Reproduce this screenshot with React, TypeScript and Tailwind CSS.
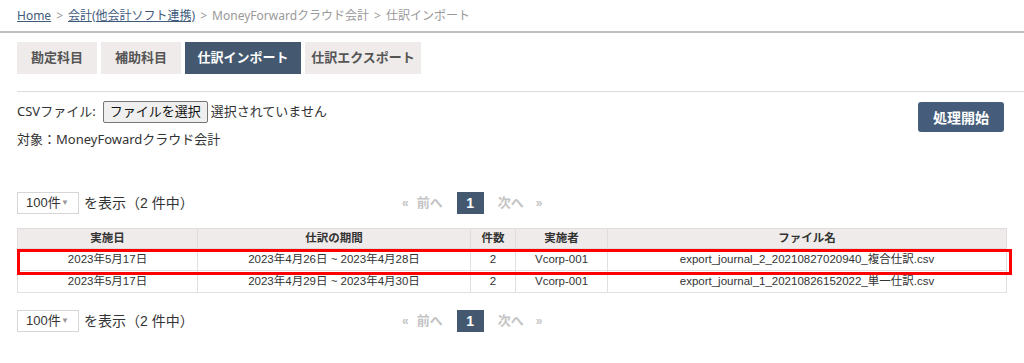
import React from 'react';

const jp = "font-['Noto_Sans','Noto_Sans_CJK_JP',sans-serif]";
const ar = "font-['Liberation_Sans','Noto_Sans_CJK_JP',sans-serif]";

const rows = [
  {
    date: '2023年5月17日',
    period: '2023年4月26日 ~ 2023年4月28日',
    count: '2',
    user: 'Vcorp-001',
    file: 'export_journal_2_20210827020940_複合仕訳.csv',
    marked: true,
  },
  {
    date: '2023年5月17日',
    period: '2023年4月29日 ~ 2023年4月30日',
    count: '2',
    user: 'Vcorp-001',
    file: 'export_journal_1_20210826152022_単一仕訳.csv',
    marked: false,
  },
];

function Pager() {
  return (
    <div className={`flex items-center h-[22px] ${ar}`}>
      <div className="flex items-center w-[385px]">
        <div className="flex items-center justify-between w-[62px] h-[22px] border border-[#d6d6d6] bg-white pl-[8px] pr-[9px] text-[13px] text-[#333]">
          <span>100件</span>
          <span className="text-[8px] text-[#999]">▼</span>
        </div>
        <span className="ml-[5px] text-[14px] text-[#333]">を表示（2 件中）</span>
      </div>
      <div className="flex items-center text-[13px] text-[#c4c4c4] font-bold">
        <span className="text-[12px]">«</span>
        <span className="ml-[8px]">前へ</span>
        <span className="ml-[14px] flex items-center justify-center w-[27px] h-[22px] bg-[#44596f] text-white text-[14px]">1</span>
        <span className="ml-[14px]">次へ</span>
        <span className="ml-[12px] text-[12px]">»</span>
      </div>
    </div>
  );
}

export default function App() {
  return (
    <div className="w-[1024px] h-[363px] bg-white overflow-hidden">
      {/* breadcrumb */}
      <div className={`h-[31px] flex items-center pl-[17px] text-[12px] text-[#999] ${jp}`}>
        <span className="underline text-[#3f5b7c]">Home</span>
        <span className="mx-[5px]">&gt;</span>
        <span className="underline text-[#3f5b7c]">会計(他会計ソフト連携)</span>
        <span className="mx-[5px]">&gt;</span>
        <span>MoneyForwardクラウド会計</span>
        <span className="mx-[5px]">&gt;</span>
        <span>仕訳インポート</span>
      </div>
      <div className="h-[2px] bg-[#bdbdbd]" />

      {/* tabs */}
      <div className="pl-[17px] pt-[9px]">
        <div className={`flex gap-[4px] text-[13px] font-bold ${jp}`}>
          <div className="w-[80px] h-[32px] flex items-center justify-center bg-[#efebea] text-[#555]">勘定科目</div>
          <div className="w-[80px] h-[32px] flex items-center justify-center bg-[#efebea] text-[#555]">補助科目</div>
          <div className="w-[116px] h-[32px] flex items-center justify-center bg-[#44596f] text-white">仕訳インポート</div>
          <div className="w-[116px] h-[32px] flex items-center justify-center bg-[#efebea] text-[#555]">仕訳エクスポート</div>
        </div>
        <div className="mt-[17px] h-[1px] bg-[#dcdcdc]" />

        {/* upload area */}
        <div className={`flex justify-between pr-[20px] pt-[9px] ${jp}`}>
          <div className="text-[13px] text-[#333]">
            <div className="flex items-center h-[22px]">
              <span>CSVファイル:</span>
              <span className="ml-[7px] h-[22px] px-[6px] flex items-center border border-[#767676] rounded-[2px] bg-[#efefef] text-[#111]">ファイルを選択</span>
              <span className="ml-[3px]">選択されていません</span>
            </div>
            <div className="mt-[6px] h-[22px] flex items-center">対象：MoneyFowardクラウド会計</div>
          </div>
          <div className="mt-[1px] w-[86px] h-[30px] flex items-center justify-center rounded-[3px] bg-[#455d7a] text-white font-bold text-[14px]">処理開始</div>
        </div>

        {/* list */}
        <div className="mt-[41px]">
          <Pager />
        </div>

        <div className={`mt-[14px] w-[990px] ${ar}`}>
          <table className="w-full border-collapse text-[11.5px] text-[#333]">
            <thead>
              <tr className="bg-[#efebea] h-[20px] font-bold">
                <th className="w-[180px] border border-[#e0dcdb]">実施日</th>
                <th className="w-[273px] border border-[#e0dcdb]">仕訳の期間</th>
                <th className="w-[45px] border border-[#e0dcdb]">件数</th>
                <th className="w-[92px] border border-[#e0dcdb]">実施者</th>
                <th className="border border-[#e0dcdb]">ファイル名</th>
              </tr>
            </thead>
            <tbody>
              {rows.map((r) => (
                <tr key={r.file} className="h-[22px] text-center">
                  <td className="border border-[#e0e0e0] relative">
                    {r.date}
                    {r.marked && (
                      <span className="absolute left-[-1px] top-[0px] w-[995px] h-[26px] border-[3px] border-[#ff0000] pointer-events-none" />
                    )}
                  </td>
                  <td className="border border-[#e0e0e0]">{r.period}</td>
                  <td className="border border-[#e0e0e0]">{r.count}</td>
                  <td className="border border-[#e0e0e0]">{r.user}</td>
                  <td className="border border-[#e0e0e0]">{r.file}</td>
                </tr>
              ))}
            </tbody>
          </table>
        </div>

        <div className="mt-[17px]">
          <Pager />
        </div>
      </div>
    </div>
  );
}
